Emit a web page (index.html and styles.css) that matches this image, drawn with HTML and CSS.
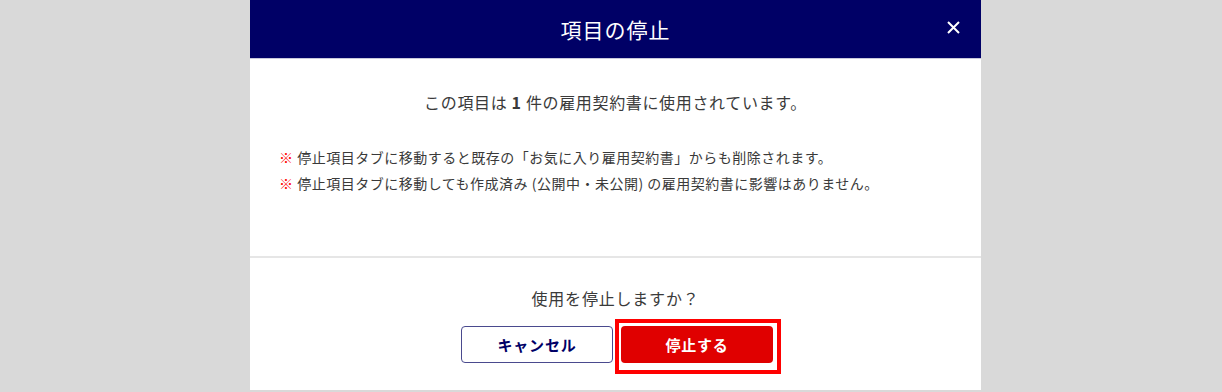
FILE: index.html
```html
<!DOCTYPE html>
<html lang="ja">
<head>
<meta charset="utf-8">
<title>項目の停止</title>
<link rel="stylesheet" href="styles.css">
</head>
<body>
<div class="modal">
  <header class="modal-header">
    <h1 class="modal-title">項目の停止</h1>
    <button class="close-btn" aria-label="閉じる">
      <svg width="13" height="13" viewBox="0 0 13 13"><path d="M1 1L12 12M12 1L1 12" stroke="#fff" stroke-width="2" fill="none"/></svg>
    </button>
  </header>
  <section class="modal-body">
    <p class="lead">この項目は <b>1</b> 件の雇用契約書に使用されています。</p>
    <ul class="notes">
      <li><span class="mark">※</span> 停止項目タブに移動すると既存の「お気に入り雇用契約書」からも削除されます。</li>
      <li><span class="mark">※</span> 停止項目タブに移動しても作成済み (公開中・未公開) の雇用契約書に影響はありません。</li>
    </ul>
  </section>
  <footer class="modal-footer">
    <p class="question">使用を停止しますか？</p>
    <div class="actions">
      <button class="btn btn-cancel">キャンセル</button>
      <button class="btn btn-stop">停止する<span class="highlight"></span></button>
    </div>
  </footer>
</div>
</body>
</html>
```

FILE: styles.css
```css
html, body {
  margin: 0;
  padding: 0;
}
body {
  background: #d9d9d9;
  font-family: "Noto Sans CJK JP", "Noto Sans", sans-serif;
  color: #3a3a3a;
}
.modal {
  width: 731px;
  margin-left: 250px;
  background: #fff;
}
.modal-header {
  position: relative;
  height: 58px;
  background: #000066;
  border-bottom: 1px solid #c8c8dc;
  display: flex;
  align-items: center;
  justify-content: center;
}
.modal-title {
  margin: 0;
  color: #fff;
  font-size: 21px;
  font-weight: 400;
  line-height: 1;
  letter-spacing: 1px;
}
.close-btn {
  position: absolute;
  right: 21px;
  top: 21px;
  width: 13px;
  height: 13px;
  padding: 0;
  border: 0;
  background: none;
  display: flex;
}
.modal-body {
  padding: 31px 29px 60px;
  border-bottom: 2px solid #e6e6e6;
}
.lead {
  margin: 0;
  text-align: center;
  font-size: 16px;
  line-height: 24px;
  letter-spacing: 0.65px;
}
.lead b {
  font-weight: 700;
}
.notes {
  list-style: none;
  margin: 30px 0 0;
  padding: 0;
  font-size: 14px;
  line-height: 26px;
  letter-spacing: 0.5px;
}
.mark {
  color: #ff0000;
  font-weight: 700;
}
.modal-footer {
  padding: 28px 0 27px;
}
.question {
  margin: 0;
  text-align: center;
  font-size: 16px;
  line-height: 24px;
  letter-spacing: 0.8px;
}
.actions {
  margin-top: 16px;
  padding-left: 3px;
  display: flex;
  justify-content: center;
  gap: 8px;
}
.btn {
  position: relative;
  width: 152px;
  height: 37px;
  border-radius: 4px;
  font-family: inherit;
  font-size: 15px;
  font-weight: 700;
  letter-spacing: 0.8px;
  padding: 0;
  cursor: pointer;
}
.btn-cancel {
  background: #fff;
  color: #000066;
  border: 1px solid #4a4a8e;
}
.btn-stop {
  background: #e00000;
  color: #fff;
  border: 0;
}
.highlight {
  position: absolute;
  left: -6px;
  top: -7px;
  width: 166px;
  height: 55px;
  box-sizing: border-box;
  border: 4px solid #ff0000;
  pointer-events: none;
}
```
